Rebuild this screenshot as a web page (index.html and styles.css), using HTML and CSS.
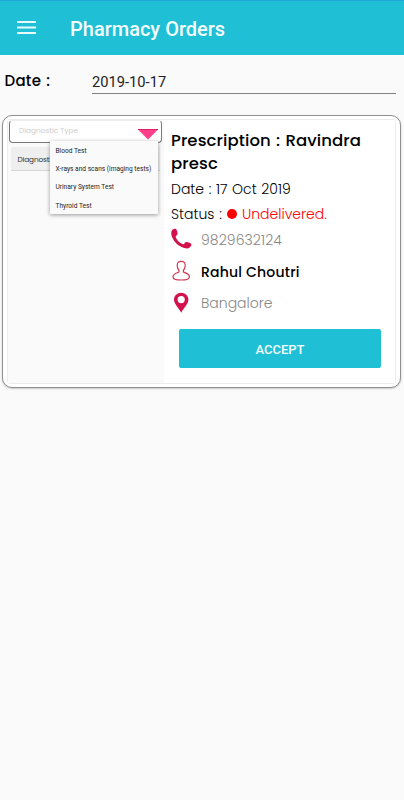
FILE: index.html
```html
<!DOCTYPE html>
<html lang="en">
<head>
<meta charset="utf-8">
<title>Pharmacy Orders</title>
<link rel="stylesheet" href="styles.css">
</head>
<body>
<header class="appbar">
  <svg class="menu" width="20" height="14" viewBox="0 0 20 14"><path d="M0 1h19M0 6.5h19M0 12h19" stroke="#e9fbfd" stroke-width="2"/></svg>
  <h1 class="title">Pharmacy Orders</h1>
</header>
<main>
  <div class="filter">
    <label class="filter-label">Date :</label>
    <div class="filter-value">2019-10-17</div>
  </div>
  <section class="card">
    <div class="card-inner">
      <div class="left">
        <div class="select"><span>Diagnostic Type</span>
          <svg width="20" height="11" viewBox="0 0 20 11"><path d="M0 0.5h20L10 10.5z" fill="#ff4088"/><path d="M0 .5h20" stroke="#e2206b"/></svg>
        </div>
        <div class="list-row">Diagnostic</div>
        <ul class="dropdown">
          <li>Blood Test</li>
          <li>X-rays and scans (imaging tests)</li>
          <li>Urinary System Test</li>
          <li>Thyroid Test</li>
        </ul>
      </div>
      <div class="right">
        <h2 class="rx">Prescription : Ravindra<br>presc</h2>
        <div class="line date">Date : 17 Oct 2019</div>
        <div class="line status"><span class="status-key">Status :</span><i class="dot"></i><span class="red">Undelivered.</span></div>
        <div class="contact">
          <svg width="22" height="22" viewBox="0 0 22 22"><path d="M1.1 2.2C2.1.8 4.1.3 5.1 1.2C6.1 2.5 6.6 4.2 6.6 6C6.6 7.3 4.5 7.7 4.7 8.8C5.5 12 8.7 15 12.2 16.3C13.5 16.7 13.7 14.1 15.1 14.1C17 14.2 18.9 14.8 20.1 15.8C21 17 19.8 18.8 18.4 19.8C16.8 20.9 13.3 20.4 10.5 19C5.9 16.7 1.9 12.2.6 7.7C0 5.4.1 3.5 1.1 2.2Z" fill="#d1124d"/></svg>
          <span class="muted phone">9829632124</span>
        </div>
        <div class="contact">
          <svg width="22" height="22" viewBox="0 0 22 22" fill="none" stroke="#d1354f" stroke-width="1.2"><path d="M6.2 5.9C6 2.5 7.5 1.3 10.2 1.3S14.4 2.5 14.2 5.9C14 8.2 13.4 9.3 12.4 10.2V12C15 13 18.4 13.8 18.4 16.9C18.4 19.5 15 20 10.2 20S2 19.5 2 16.9C2 13.8 5.6 13 8 12V10.2C7 9.3 6.4 8.2 6.2 5.9Z"/></svg>
          <strong class="name">Rahul Choutri</strong>
        </div>
        <div class="contact">
          <svg width="22" height="22" viewBox="0 0 22 22"><path fill-rule="evenodd" d="M10.2.7C6.2.7 3 3.6 3 7.7C3 12 8.1 16.2 10.2 20.7C12.3 16.2 17.4 12 17.4 7.7C17.4 3.6 14.2.7 10.2.7ZM10.2 4a3.6 3.6 0 1 1 0 7.2a3.6 3.6 0 1 1 0-7.2Z" fill="#d1124d"/></svg>
          <span class="muted city">Bangalore</span>
        </div>
        <button class="accept">ACCEPT</button>
      </div>
    </div>
  </section>
</main>
</body>
</html>
```
FILE: styles.css
```css
* { box-sizing: border-box; }
body {
  margin: 0;
  min-height: 800px;
  background: #fafafa;
  color: #000;
  font-family: Poppins, Inter, "Liberation Sans", sans-serif;
}
.appbar {
  display: flex;
  align-items: center;
  height: 55px;
  padding: 1px 17px 0;
  background: #1fbfd5;
  border-top: 1px solid #23a5d9;
}
.menu { display: block; margin-top: -1px; }
.title {
  margin: 1px 0 0 33px;
  font: 500 20px/24px Roboto, sans-serif;
  color: #f4fdfe;
}
.filter {
  display: flex;
  height: 60px;
  padding: 14px 8px 0 4.5px;
}
.filter-label {
  width: 87.5px;
  font-size: 15px;
  font-weight: 500;
  letter-spacing: .25px;
  word-spacing: 1px;
  line-height: 24px;
}
.filter-value {
  flex: 1;
  height: 25px;
  border-bottom: 1px solid #828282;
  color: #222;
  font: 400 14.7px/26px Roboto, sans-serif;
}
.card {
  width: 399px;
  height: 273px;
  margin-left: 2px;
  padding: 3px 4px 4px;
  background: #fff;
  border: 1.5px solid #909090;
  border-radius: 10px;
  box-shadow: 0 1px 2px #0003;
}
.card-inner {
  display: flex;
  height: 265px;
  border: 1px solid #ececec;
  border-radius: 3px;
}
.left {
  position: relative;
  width: 156px;
  padding: 0 1px;
  background: #fafafa;
}
.select {
  display: flex;
  justify-content: space-between;
  width: 153px;
  height: 23px;
  padding: 8px 3px 0 9px;
  background: #fff;
  border: 1px solid #777;
  border-top-color: #eee;
  border-radius: 4px;
  color: #cecece;
  font-size: 7.4px;
  line-height: 3px;
}
.list-row {
  width: 149px;
  height: 24px;
  margin: 4px 0 0 2px;
  padding-left: 6.5px;
  background: #efefef;
  border-bottom: 1px solid #d6d6d6;
  color: #333;
  font-size: 7.4px;
  letter-spacing: -.15px;
  line-height: 25px;
}
.dropdown {
  position: absolute;
  left: 41.5px;
  top: 21px;
  width: 108.5px;
  height: 73px;
  margin: 0;
  padding: 1px 6px 0;
  list-style: none;
  background: #fafafa;
  box-shadow: 0 1px 4px #0006;
  font: 6.6px/18.2px Roboto, sans-serif;
  color: #222;
  white-space: nowrap;
}
.right { flex: 1; padding: 10px 0 0 7px; background: #fff; }
.rx {
  margin: 0;
  font-size: 16.5px;
  font-weight: 500;
  letter-spacing: .1px;
  word-spacing: .8px;
  line-height: 22.5px;
  white-space: nowrap;
}
.line { font-size: 14px; font-weight: 300; height: 24.5px; line-height: 24.5px; }
.date { margin-top: 2px; word-spacing: .8px; }
.status { display: flex; align-items: center; word-spacing: 1px; }
.status-key { width: 56px; }
.dot { width: 10px; height: 10px; margin-right: 5px; border-radius: 50%; background: #f00; }
.red { color: #f00; }
.contact {
  display: flex;
  align-items: center;
  height: 32px;
  margin-bottom: -.3px;
  font-size: 14px;
}
.contact svg { margin: 0 8px 0 0; }
.status + .contact { margin-top: -2.7px; }
.contact span, .contact strong { padding-top: 2px; }
.muted { color: #888; font-weight: 300; }
.phone { letter-spacing: .1px; }
.name { font-weight: 500; letter-spacing: .2px; }
.accept {
  display: block;
  width: 202px;
  height: 39px;
  margin: 10.7px 0 0 8px;
  padding: 2px 0 0;
  border: 0;
  border-radius: 2px;
  background: #1fbfd5;
  color: #f4fdfe;
  font: 500 13px/20px Roboto, sans-serif;
}
```
